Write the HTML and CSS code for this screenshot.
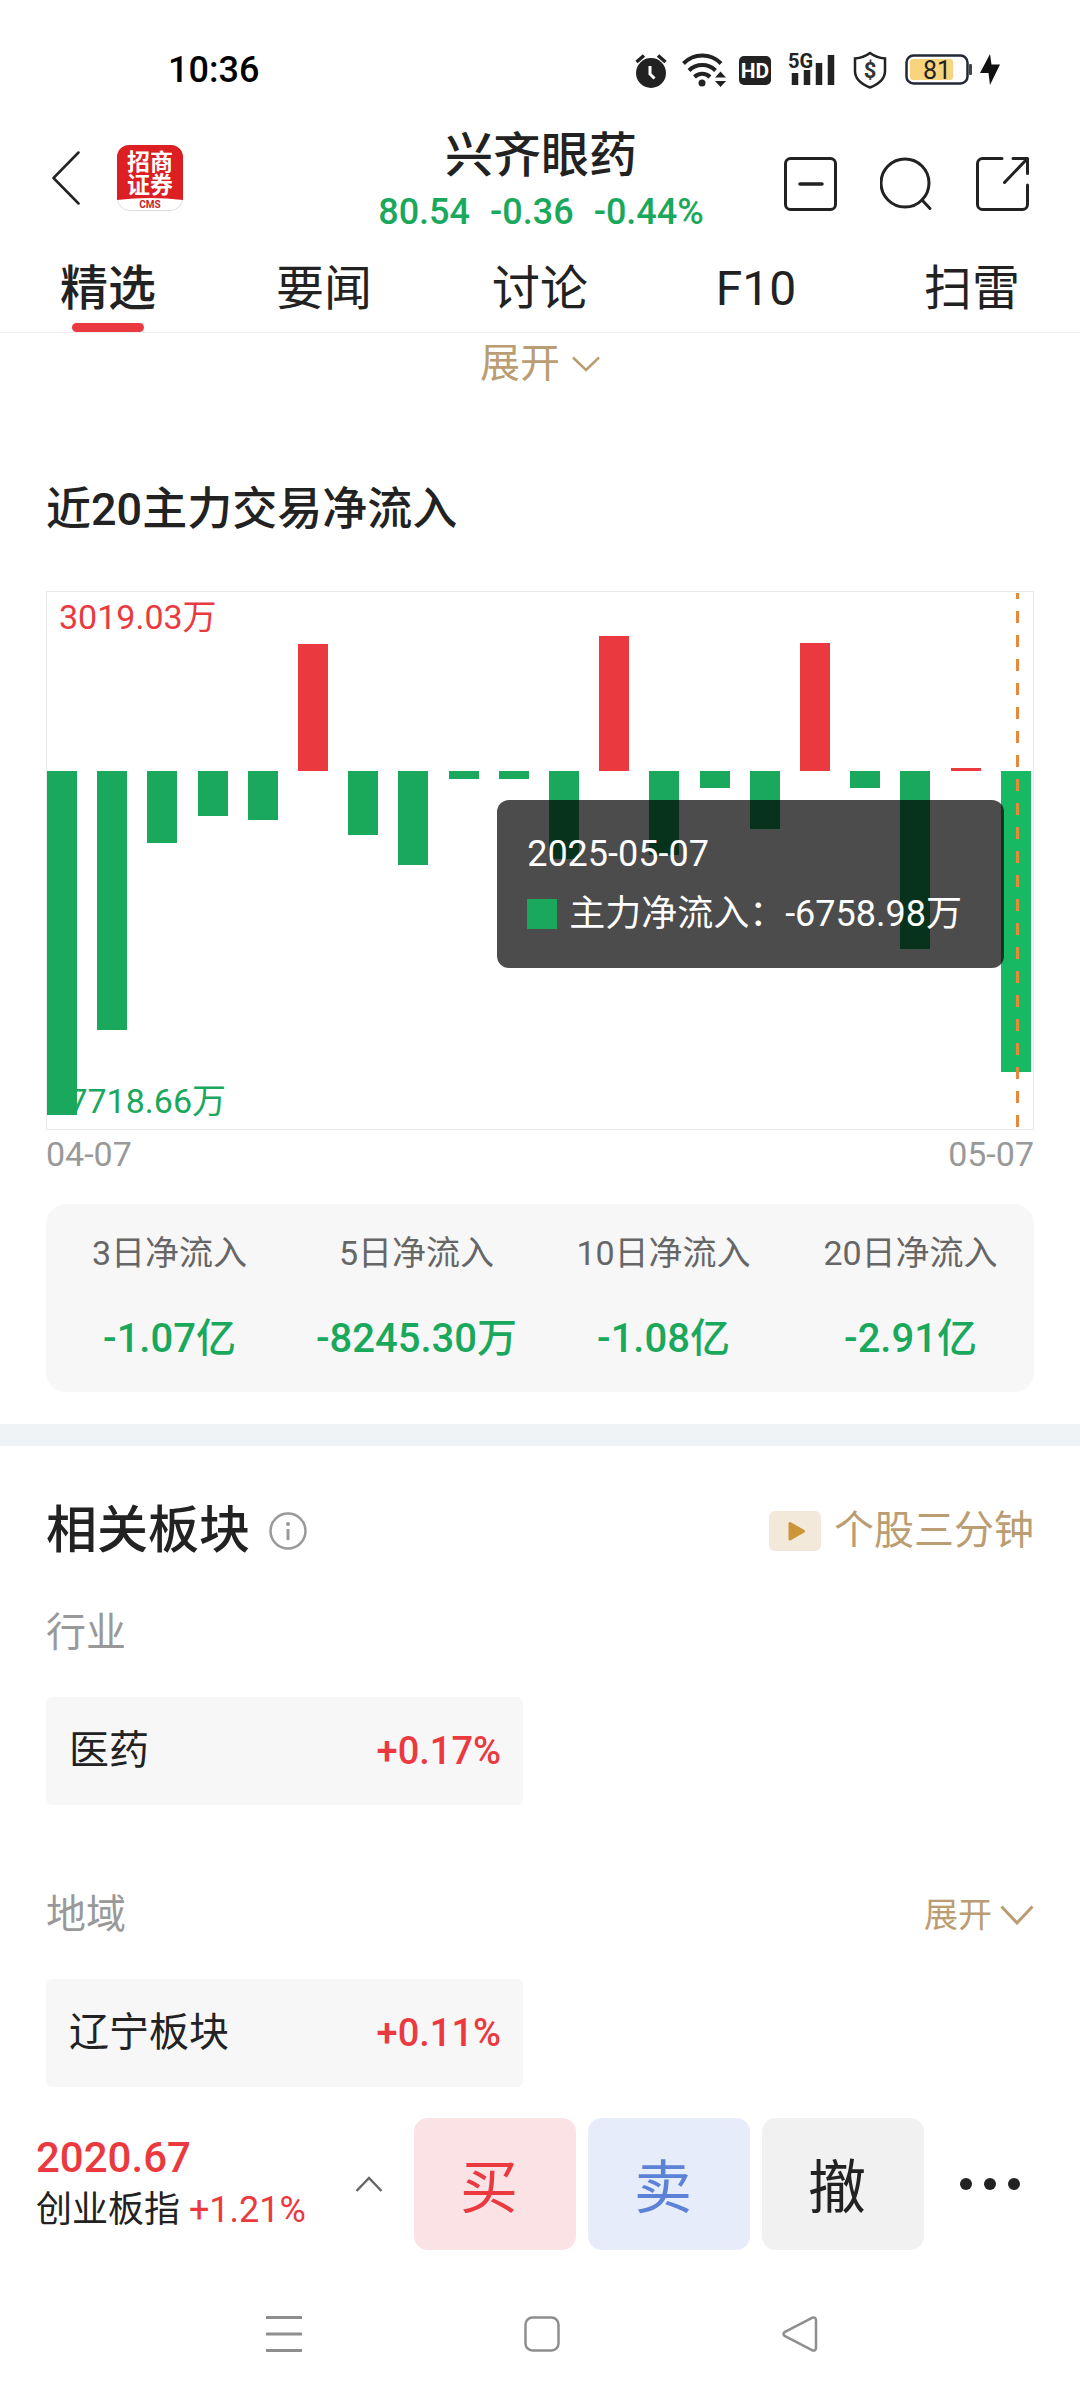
FILE: index.html
```html
<!DOCTYPE html>
<html lang="zh-CN">
<head>
<meta charset="utf-8">
<meta name="viewport" content="width=device-width, initial-scale=1">
<title>兴齐眼药</title>
<link rel="stylesheet" href="styles.css">
</head>
<body>
<div class="status-bar">
  <time class="clock">10:36</time>
  <div class="status-icons">
    <svg width="32" height="36" viewBox="0 0 32 36" aria-hidden="true">
      <circle cx="16" cy="21" r="15" fill="#222"/>
      <path d="M1.500 10 L9 3.500 M30.500 10 L23 3.500" stroke="#222" stroke-width="3.500" fill="none"/>
      <path d="M15 14 V22 L19.500 26.500" stroke="#fff" stroke-width="3" fill="none"/>
    </svg>
    <svg class="wifi" width="44" height="38" viewBox="0 0 44 38" aria-hidden="true">
      <path d="M1.500 12.500 A26 26 0 0 1 39 12.500 M7 19.500 A19 19 0 0 1 33.500 19.500 M12.500 26 A11 11 0 0 1 28 26" stroke="#222" stroke-width="4" fill="none"/>
      <circle cx="20" cy="32" r="3.500" fill="#222"/>
      <path d="M33 26.500 L38.500 20.500 L44 26.500 Z M33 30 L38.500 36 L44 30 Z" fill="#222"/>
    </svg>
    <svg class="hd" width="32" height="36" viewBox="0 0 32 36" aria-hidden="true">
      <rect y="4" width="32" height="29" rx="5" fill="#222"/>
      <text x="16" y="26" text-anchor="middle" class="hd-text">HD</text>
    </svg>
    <svg class="signal" width="49" height="44" viewBox="0 0 49 44" aria-hidden="true">
      <text x="1" y="20" class="net-text">5G</text>
      <path d="M8 25 V37 M20 22 V37 M32 15 V37 M44 7 V37" stroke="#222" stroke-width="6.500"/>
    </svg>
    <svg class="shield" width="34" height="38" viewBox="0 0 34 38" aria-hidden="true">
      <path d="M17 2 C21 5 26 7 32 7.500 V20 C32 28 26 33 17 36.500 C8 33 2 28 2 20 V7.500 C8 7 13 5 17 2 Z" fill="none" stroke="#222" stroke-width="2.500"/>
      <text x="17" y="27" text-anchor="middle" class="shield-text">$</text>
    </svg>
    <svg class="battery" width="67" height="38" viewBox="0 0 67 38" aria-hidden="true">
      <rect x="1.500" y="4.500" width="61" height="28" rx="7" fill="none" stroke="#222836" stroke-width="2.500"/>
      <rect x="5" y="8" width="43" height="21" rx="3" fill="#f8d47e"/>
      <rect x="64" y="13" width="3" height="11" rx="1" fill="#444"/>
      <text x="32" y="28" text-anchor="middle" class="battery-text">81</text>
    </svg>
    <svg class="bolt" width="20" height="38" viewBox="0 0 20 38" aria-hidden="true">
      <path d="M10 3 L0 22 H8.500 L10 34 L20 13.500 H11.500 Z" fill="#111"/>
    </svg>
  </div>
</div>

<header class="header">
  <div class="header-left">
    <button class="icon-button" type="button" aria-label="返回">
      <svg width="28" height="54" viewBox="0 0 28 54"><path d="M26.500 1.500 L1.500 27 L26.500 52.500" fill="none" stroke="#222" stroke-width="2.500" stroke-linecap="round" stroke-linejoin="round"/></svg>
    </button>
    <svg class="broker" width="66" height="66" viewBox="0 0 66 66" role="img" aria-label="招商证券">
      <rect x=".5" y=".5" width="65" height="65" rx="12" fill="#fff" stroke="#ddd"/>
      <path d="M0 55 V12 A12 12 0 0 1 12 0 H54 A12 12 0 0 1 66 12 V55 Q33 51 0 55 Z" fill="#dc1f22"/>
      <text x="33" y="25" text-anchor="middle" class="broker-text">招商</text>
      <text x="33" y="48" text-anchor="middle" class="broker-text">证券</text>
      <text x="33" y="63" text-anchor="middle" class="broker-latin">CMS</text>
    </svg>
  </div>
  <div class="stock">
    <h1 class="stock-name">兴齐眼药</h1>
    <p class="stock-price"><span>80.54</span><span>-0.36</span><span>-0.44%</span></p>
  </div>
  <div class="header-right">
    <button class="icon-button" type="button" aria-label="删除自选">
      <svg width="54" height="54" viewBox="0 0 54 54" fill="none" stroke="#222" stroke-width="3" stroke-linecap="round"><rect x="1.500" y="1.500" width="50" height="51" rx="5"/><path d="M16 27 H38" stroke-width="3.500"/></svg>
    </button>
    <button class="icon-button" type="button" aria-label="搜索">
      <svg width="54" height="54" viewBox="0 0 54 54" fill="none" stroke="#222" stroke-width="3" stroke-linecap="round"><circle cx="25" cy="26" r="24"/><path d="M42 43 L50 51.500"/></svg>
    </button>
    <button class="icon-button" type="button" aria-label="分享">
      <svg width="54" height="54" viewBox="0 0 54 54" fill="none" stroke="#222" stroke-width="3" stroke-linecap="round" stroke-linejoin="round"><path d="M26 1.500 H6.500 A5 5 0 0 0 1.500 6.500 V47.500 A5 5 0 0 0 6.500 52.500 H46.500 A5 5 0 0 0 51.500 47.500 V28 M37 1.500 H51.500 V16.500 M51 2 L28.500 25.500"/></svg>
    </button>
  </div>
</header>

<nav class="tabs">
  <a class="tab tab-active" href="#featured" aria-current="page">精选</a>
  <a class="tab" href="#news">要闻</a>
  <a class="tab" href="#forum">讨论</a>
  <a class="tab" href="#f10">F10</a>
  <a class="tab" href="#risk">扫雷</a>
</nav>

<main>
  <section class="flow" id="featured">
    <button class="expand expand-top" type="button">展开
      <svg width="28" height="16" viewBox="0 0 28 16"><path d="M1 1.500 L14 14 L27 1.500" fill="none" stroke="currentColor" stroke-width="2.500"/></svg>
    </button>
    <h2 class="flow-title">近20主力交易净流入</h2>
    <div class="chart">
      <svg class="chart-plot" viewBox="0 0 988 539" role="img" aria-label="近20日主力净流入柱状图">
        <rect class="frame" x=".5" y=".5" width="987" height="538"/>
        <text class="axis up" x="13" y="38">3019.03万</text>
        <text class="axis down" x="13" y="522">-7718.66万</text>
        <g class="down">
          <rect x="1" y="180" width="30" height="344"/>
          <rect x="51" y="180" width="30" height="259"/>
          <rect x="101" y="180" width="30" height="72"/>
          <rect x="152" y="180" width="30" height="45"/>
          <rect x="202" y="180" width="30" height="49"/>
          <rect x="302" y="180" width="30" height="64"/>
          <rect x="352" y="180" width="30" height="94"/>
          <rect x="403" y="180" width="30" height="8"/>
          <rect x="453" y="180" width="30" height="8"/>
          <rect x="503" y="180" width="30" height="88"/>
          <rect x="603" y="180" width="30" height="84"/>
          <rect x="654" y="180" width="30" height="17"/>
          <rect x="704" y="180" width="30" height="58"/>
          <rect x="804" y="180" width="30" height="17"/>
          <rect x="854" y="180" width="30" height="178"/>
        </g>
        <g class="up">
          <rect x="252" y="53" width="30" height="127"/>
          <rect x="553" y="45" width="30" height="135"/>
          <rect x="754" y="52" width="30" height="128"/>
          <rect x="905" y="177" width="30" height="3"/>
        </g>
        <rect class="selected" x="955" y="180" width="30" height="301"/>
        <path class="pointer" d="M971.500 2 V537"/>
      </svg>
      <div class="tooltip">
        <span>2025-05-07</span>
        <span class="tooltip-row"><i class="swatch"></i>主力净流入：-6758.98万</span>
      </div>
    </div>
    <div class="dates"><span>04-07</span><span>05-07</span></div>
    <dl class="totals">
      <div><dt>3日净流入</dt><dd>-1.07亿</dd></div>
      <div><dt>5日净流入</dt><dd>-8245.30万</dd></div>
      <div><dt>10日净流入</dt><dd>-1.08亿</dd></div>
      <div><dt>20日净流入</dt><dd>-2.91亿</dd></div>
    </dl>
  </section>

  <section class="sectors">
    <div class="row">
      <div class="heading">
        <h2 class="sectors-title">相关板块</h2>
        <button class="icon-button" type="button" aria-label="说明">
          <svg width="38" height="38" viewBox="0 0 38 38" fill="none" stroke="#999" stroke-width="2.500"><circle cx="19" cy="19" r="17.500"/><path d="M19 17 V28" stroke-width="3"/><circle cx="19" cy="12" r="2" fill="#999" stroke="none"/></svg>
        </button>
      </div>
      <a class="video" href="#video">
        <svg width="52" height="40" viewBox="0 0 52 40"><rect width="52" height="40" rx="6" fill="#f3e9da"/><path d="M21 12.500 V28 L34.500 20.200 Z" fill="#cc953a" stroke="#cc953a" stroke-width="3" stroke-linejoin="round"/></svg>
        个股三分钟
      </a>
    </div>
    <div class="row group-head"><h3 class="group-title">行业</h3></div>
    <a class="sector" href="#pharma"><span>医药</span><span class="change">+0.17%</span></a>
    <div class="row group-head group-next">
      <h3 class="group-title">地域</h3>
      <button class="expand expand-small" type="button">展开
        <svg width="34" height="20" viewBox="0 0 34 20"><path d="M1.500 1.500 L17 18 L32.500 1.500" fill="none" stroke="currentColor" stroke-width="3"/></svg>
      </button>
    </div>
    <a class="sector" href="#liaoning"><span>辽宁板块</span><span class="change">+0.11%</span></a>
  </section>
</main>

<footer class="trade-bar">
  <button class="index" type="button">
    <span class="index-text">
      <strong class="index-value">2020.67</strong>
      <span class="index-name">创业板指 <span class="index-change">+1.21%</span></span>
    </span>
    <svg width="28" height="16" viewBox="0 0 28 16"><path d="M1.500 15 L14 2 L26.500 15" fill="none" stroke="#666" stroke-width="2.500"/></svg>
  </button>
  <div class="trade-actions">
    <button class="trade buy" type="button">买</button>
    <button class="trade sell" type="button">卖</button>
    <button class="trade cancel" type="button">撤</button>
  </div>
  <button class="icon-button" type="button" aria-label="更多">
    <svg width="62" height="14" viewBox="0 0 62 14" fill="#222"><circle cx="7" cy="7" r="6"/><circle cx="31" cy="7" r="6"/><circle cx="55" cy="7" r="6"/></svg>
  </button>
</footer>

<nav class="system-nav">
  <button class="icon-button" type="button" aria-label="最近任务">
    <svg width="36" height="36" viewBox="0 0 36 36" stroke="#8e8e8e" stroke-width="3"><path d="M0 1.500 H36 M0 18 H36 M0 34.500 H36"/></svg>
  </button>
  <button class="icon-button" type="button" aria-label="主屏幕">
    <svg width="36" height="36" viewBox="0 0 36 36" fill="none" stroke="#8e8e8e" stroke-width="2.500"><rect x="1.500" y="1.500" width="33" height="33" rx="7"/></svg>
  </button>
  <button class="icon-button" type="button" aria-label="后退">
    <svg width="36" height="36" viewBox="0 0 36 36" fill="none" stroke="#8e8e8e" stroke-width="2.500" stroke-linejoin="round"><path d="M3 15.800 L30 1.800 Q34 .5 34 4.500 V31.500 Q34 35.500 30 34.200 L3 20.200 Q0 18 3 15.800 Z"/></svg>
  </button>
</nav>
</body>
</html>
```

FILE: styles.css
```css
:root {
  --ink: #222;
  --muted: #999;
  --red: #ea3a40;
  --green: #1aa85c;
  --gold: #ba9d72;
  --panel: #f7f7f7;
}

* { box-sizing: border-box; }

body {
  margin: 0;
  background: #fff;
  color: var(--ink);
  font-family: Roboto, "Noto Sans CJK SC", sans-serif;
  font-size: 40px;
  line-height: 48px;
}

h1, h2, h3, p, dl, dd { margin: 0; font-weight: 400; }
button { padding: 0; border: 0; background: none; color: inherit; font: inherit; }
a { color: inherit; text-decoration: none; }
svg { display: block; flex: none; }

/* Status bar */
.status-bar {
  display: flex;
  justify-content: space-between;
  align-items: center;
  height: 120px;
  padding: 20px 80px 0 168px;
}
.clock { color: #000; font-size: 36px; font-weight: 500; }
.status-icons { display: flex; align-items: center; }
.wifi { margin-left: 15px; }
.hd { margin-left: 13px; }
.signal { margin-left: 16px; }
.shield { margin-left: 17px; }
.battery { margin-left: 18px; }
.bolt { margin-left: 8px; }
.hd-text { fill: #fff; font-size: 21px; font-weight: 700; }
.net-text { fill: #222; font-size: 20px; font-weight: 700; }
.shield-text { fill: #333; font-size: 22px; font-weight: 700; }
.battery-text { fill: #222; font-size: 25px; }

/* Header */
.header {
  display: grid;
  grid-template-columns: 1fr auto 1fr;
  padding: 8px 50px 0 52px;
}
.header-left { display: flex; align-items: center; gap: 37px; padding-bottom: 12px; }
.header-right { display: flex; align-items: center; justify-content: flex-end; gap: 42px; }
.stock { text-align: center; }
.stock-name { font-size: 48px; font-weight: 500; line-height: 56px; }
.stock-price {
  display: flex;
  justify-content: center;
  gap: 20px;
  color: var(--green);
  font-size: 36px;
  font-weight: 500;
  line-height: 56px;
}
.broker-text { fill: #fff; font-size: 23px; font-weight: 700; }
.broker-latin { fill: #c8252a; font-size: 10px; font-weight: 700; }

/* Tabs */
.tabs { display: grid; grid-template-columns: repeat(5, 1fr); border-bottom: 1px solid #eee; }
.tab {
  display: flex;
  flex-direction: column;
  align-items: center;
  height: 92px;
  padding-top: 21px;
  font-size: 48px;
  line-height: 56px;
}
.tab-active { font-weight: 500; }
.tab-active::after {
  content: "";
  width: 72px;
  height: 9px;
  margin-top: auto;
  border-radius: 5px;
  background: var(--red);
}

/* Capital flow */
.flow { padding: 7px 46px 32px; }
.expand { display: flex; align-items: center; color: var(--gold); }
.expand-top { gap: 12px; margin: 0 auto; }
.expand-small { gap: 8px; font-size: 34px; }
.flow-title { margin: 92px 0 51px; font-size: 45px; font-weight: 500; line-height: 60px; }
.chart { position: relative; }
.chart-plot { width: 100%; }
.frame { fill: none; stroke: #eaeaea; }
.axis { font-size: 34px; }
.up { fill: var(--red); }
.down { fill: var(--green); }
.selected { fill: #18b963; }
.pointer { stroke: #e8883c; stroke-width: 3; stroke-dasharray: 12 12; stroke-dashoffset: 6; }
.tooltip {
  position: absolute;
  top: 209px;
  right: 30px;
  display: flex;
  flex-direction: column;
  gap: 12px;
  padding: 30px 42px 30px 30px;
  border-radius: 12px;
  background: rgba(0, 0, 0, .7);
  color: #fff;
  font-size: 36px;
}
.tooltip-row { display: flex; align-items: center; white-space: nowrap; }
.swatch { width: 30px; height: 30px; margin-right: 12px; background: var(--green); }
.dates { display: flex; justify-content: space-between; color: var(--muted); font-size: 34px; }
.totals {
  display: grid;
  grid-template-columns: repeat(4, 1fr);
  margin-top: 26px;
  padding: 25px 0;
  border-radius: 20px;
  background: var(--panel);
  text-align: center;
}
.totals dt { color: #666; font-size: 34px; }
.totals dd { margin-top: 34px; color: var(--green); font-weight: 500; line-height: 56px; }

/* Related sectors */
.sectors { padding: 53px 46px 0; border-top: 22px solid #f0f3f6; }
.row { display: flex; justify-content: space-between; align-items: center; }
.heading { display: flex; align-items: center; gap: 19px; }
.sectors-title { font-size: 51px; font-weight: 500; line-height: 64px; }
.video { display: flex; align-items: center; gap: 13px; color: var(--gold); }
.group-head { margin: 46px 0 40px; }
.group-next { margin-top: 86px; }
.group-title { color: var(--muted); font-size: 40px; }
.sector {
  display: flex;
  justify-content: space-between;
  align-items: center;
  width: calc(50% - 17px);
  height: 108px;
  padding: 0 22px 0 23px;
  border-radius: 6px;
  background: var(--panel);
}
.change { color: var(--red); font-size: 38px; font-weight: 500; }

/* Trade bar */
.trade-bar { display: flex; align-items: center; padding: 31px 59px 0 36px; }
.index { display: flex; justify-content: space-between; align-items: center; width: 347px; text-align: left; }
.index-text { display: flex; flex-direction: column; line-height: 52px; }
.index-value { color: var(--red); font-size: 42px; font-weight: 500; }
.index-name { font-size: 36px; }
.index-change { color: var(--red); }
.trade-actions { display: flex; flex: 1; gap: 12px; margin: 0 35px 0 31px; }
.trade {
  flex: 1;
  height: 132px;
  padding: 8px 12px 0 0;
  border-radius: 14px;
  font-size: 58px;
  line-height: 64px;
}
.buy { background: #fbe2e5; color: var(--red); }
.sell { background: #e6ecf9; color: #5b82d6; }
.cancel { background: #f1f1f1; }

/* System navigation */
.system-nav { display: flex; justify-content: center; gap: 222px; padding: 66px 0 48px 4px; }
```
